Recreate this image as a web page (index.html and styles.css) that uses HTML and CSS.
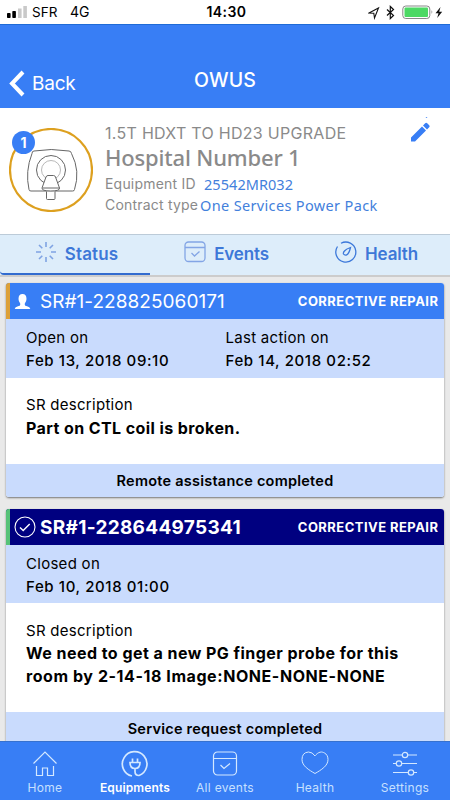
FILE: index.html
```html
<!DOCTYPE html>
<html lang="en">
<head>
<meta charset="utf-8">
<title>OWUS</title>
<link rel="stylesheet" href="styles.css">
</head>
<body>
<div class="app">
  <div class="statusbar">
    <svg class="signal" width="20" height="12" viewBox="0 0 20 12"><rect x="0" y="7" width="3.6" height="5" rx=".8"/><rect x="5.3" y="5" width="3.6" height="7" rx=".8"/><path fill="#c9c9c9" d="M11 2.500h3.600v9.500H11zM16.300 0h3.600v12h-3.600z"/></svg>
    <span class="carrier">SFR</span>
    <span class="network">4G</span>
    <span class="clock">14:30</span>
    <svg class="sysicons" width="76" height="16" viewBox="0 0 76 16"><path d="M1 9 10.500 4 6.500 14 5.800 9.200Z" fill="none" stroke="#111" stroke-width="1.100"/><path d="m19 5.500 6.500 6-3.200 3V2.500l3.200 3-6.500 6" fill="none" stroke="#111" stroke-width="1.200"/><rect x="34.800" y="2" width="27" height="12.500" rx="3" fill="#fff" stroke="#888"/><rect x="36.500" y="3.500" width="23.500" height="9.500" rx="1" fill="#4cd964"/><path d="M63.500 6v4q1.800-2 0-4" fill="#888"/><path d="m72.500 3-5 6.200h3l-1.300 4.800 5-6.200h-3z" fill="#111"/></svg>
  </div>

  <header class="navbar">
    <a class="back"><svg width="17" height="27" viewBox="0 0 17 27"><path d="M14 2 3 13.500 14 25" fill="none" stroke="#fff" stroke-width="4"/></svg><span>Back</span></a>
    <h1>OWUS</h1>
  </header>

  <section class="equipment">
    <div class="avatar">
      <svg width="84" height="84" viewBox="0 0 84 84"><circle cx="42" cy="42" r="41" fill="#fff" stroke="#dda01f" stroke-width="2.200"/><g fill="#fff" stroke="#666" stroke-width="1"><path d="M25 23q17-3 35 0 2 0 2.500 2.500 9 17.500 3 36 0 1.500-2 1.500H22q-2 0-2-1.500-4-18 3-36 0-2.500 2-2.500Z"/><circle cx="42" cy="42" r="14.500"/><circle cx="42" cy="42" r="9.500" stroke="#999" stroke-width=".7"/><path d="M39 47.500h5.500q1.500 0 2 1.500l4 11q.5 3-8.700 3t-8.800-3l4-11q.5-1.500 2-1.500ZM33.500 60h17M37.500 63.500v7q0 1 1 1H45q1 0 1-1v-7"/></g></svg>
      <span class="badge">1</span>
    </div>
    <div class="details">
      <div class="model">1.5T HDXT TO HD23 UPGRADE</div>
      <div class="site">Hospital Number 1</div>
      <div class="field"><span class="key k1">Equipment ID</span><span class="val v1">25542MR032</span></div>
      <div class="field"><span class="key k2">Contract type</span><span class="val v2">One Services Power Pack</span></div>
    </div>
    <svg class="edit" width="22" height="26" viewBox="0 0 22 26"><path d="m1 20.500 11-11 4 4-11 11H1Zm12-12 2.200-2.200q1-1 2 0l2 2q1 1 0 2L17 12.500Z" fill="#387ef5"/><path d="M15.500 1 16.500 0l1 1" fill="#387ef5"/></svg>
  </section>

  <nav class="tabs">
    <a class="tab active"><svg width="22" height="22" viewBox="0 0 22 22" fill="none" stroke="#7fa3e3" stroke-width="1.600"><path d="M11 1v5M11 16v5M1 11h5M16 11h5M4 4l3.300 3.300M14.700 14.700 18 18M18 4l-3.300 3.300M7.300 14.700 4 18"/></svg><span>Status</span></a>
    <a class="tab"><svg width="22" height="22" viewBox="0 0 22 22" fill="none" stroke="#83a5e5" stroke-width="1.300"><rect x="1" y="1" width="20" height="19.500" rx="3.500"/><path d="M1 6.500h20M7.500 12l3 3 5-4.500"/></svg><span>Events</span></a>
    <a class="tab"><svg width="22" height="22" viewBox="0 0 22 22" fill="none" stroke="#3c78da" stroke-width="1.300"><path d="M6 2.300A10 10 0 1 1 2.500 5.500M15.500 6.500q-1.500 6.500-4 7.500-2 .5-3-1-.5-1.500 1-3Q11 8 15.500 6.500Z"/></svg><span>Health</span></a>
  </nav>

  <main class="list">
    <article class="card open">
      <div class="card-head"><svg width="17" height="17" viewBox="0 0 17 17"><path fill="#fff" d="M8.500 1q4 0 4 5 0 2.500-1.700 4.500v1.500q0 1 2.200 1.300 3 .5 3.300 2.700H.7q.3-2.200 3.300-2.700 2.200-.3 2.200-1.300v-1.500Q4.500 8.500 4.500 6q0-5 4-5Z"/></svg><span class="number">SR#1-228825060171</span><span class="kind">CORRECTIVE REPAIR</span></div>
      <div class="dates">
        <div><p>Open on</p><p class="date">Feb 13, 2018 09:10</p></div>
        <div><p>Last action on</p><p class="date">Feb 14, 2018 02:52</p></div>
      </div>
      <div class="desc"><p>SR description</p><p class="text t1">Part on CTL coil is broken.</p></div>
      <div class="card-foot"><span class="f1">Remote assistance completed</span></div>
    </article>
    <article class="card closed">
      <div class="card-head"><svg width="22" height="22" viewBox="0 0 22 22" fill="none" stroke="#fff" stroke-width="1.100"><circle cx="11" cy="11" r="10"/><path d="m6 11.500 3.200 3 6.500-6.500" stroke-width="1.400"/></svg><span class="number">SR#1-228644975341</span><span class="kind">CORRECTIVE REPAIR</span></div>
      <div class="dates">
        <div><p>Closed on</p><p class="date">Feb 10, 2018 01:00</p></div>
      </div>
      <div class="desc"><p>SR description</p><p class="text"><span class="t2">We need to get a new PG finger probe for this</span><br><span class="t3">room by 2-14-18 Image:NONE-NONE-NONE</span></p></div>
      <div class="card-foot"><span class="f2">Service request completed</span></div>
    </article>
  </main>

  <nav class="tabbar">
    <a><svg width="28" height="28" viewBox="0 0 28 28"><path d="M2.500 13.500 14 2l11.500 11.500M5.500 16v9.500h6V18h5v7.500h6V16"/></svg><span>Home</span></a>
    <a class="current"><svg width="28" height="28" viewBox="0 0 28 28"><path stroke-width="1.700" d="M14 18v3.500q0 4 4 4A12.300 12.300 0 1 0 11 26M9 12.500h10q0 6-5 6t-5-6ZM11.500 8.500v4M16.500 8.500v4"/></svg><span>Equipments</span></a>
    <a><svg width="28" height="28" viewBox="0 0 28 28"><rect x="2.500" y="2" width="23" height="23" rx="4"/><path d="M2.500 8.500h23M9.500 15l3.500 3.500 6-5"/></svg><span>All events</span></a>
    <a><svg width="28" height="28" viewBox="0 0 28 28"><path stroke-width="1" d="M14 6q-2.500-4-6.500-4Q1 2.500 1 9.500C1 16 8 20 14 23.500 20 20 27 16 27 9.500 27 2.500 20.500 2 20.500 2 16.500 2 14 6 14 6Z"/></svg><span>Health</span></a>
    <a><svg width="28" height="28" viewBox="0 0 28 28"><path d="M2 5h9M17 5h9M2 13.500h3M11 13.500h15M2 22.500h15M23 22.500h3"/><circle cx="14" cy="5" r="2.700"/><circle cx="8" cy="13.500" r="2.700"/><circle cx="20" cy="22.500" r="2.700"/></svg><span>Settings</span></a>
  </nav>
</div>
</body>
</html>
```
FILE: styles.css
```css
* { box-sizing: border-box; }
body { margin: 0; font-family: Inter, Roboto, sans-serif; color: #000; }
p, h1 { margin: 0; font-weight: 400; }
svg { display: block; flex: none; }
span { white-space: nowrap; }
.app { width: 450px; height: 800px; display: flex; flex-direction: column; overflow: hidden; background: #e9e9e9; }

.statusbar { height: 24px; flex: none; display: grid; grid-template-columns: 25px 38px 118px 1fr 76px; align-items: center; padding: 0 6px 0 7px; background: #fff; font-size: 14px; line-height: 24px; }
.signal { margin-top: -1px; }
.carrier { font-size: 13.5px; }
.clock { font-weight: 600; text-align: left; padding-left: 18.5px; letter-spacing: .4px; }

.navbar { height: 84px; flex: none; display: grid; grid-template-columns: 1fr auto 1fr; align-items: center; padding: 28px 9px 0; background: #387ef5; border-top: 1px solid #1f6bd6; color: #fff; }
.back { display: flex; align-items: center; gap: 6px; font-size: 19px; letter-spacing: -.2px; margin-top: 5px; }
.navbar h1 { font-size: 19.5px; font-weight: 500; line-height: 26px; margin-top: -2px; letter-spacing: .2px; }

.equipment { height: 126px; flex: none; display: flex; background: #fff; padding: 8px 18px 0 9px; }
.avatar { position: relative; width: 96px; padding-top: 12px; }
.badge { position: absolute; left: 3px; top: 15px; width: 23px; height: 23px; border-radius: 50%; background: #387ef5; color: #fff; font: 700 14px/23px Inter, sans-serif; text-align: center; }
.details { flex: 1; color: #8a8a8a; padding-top: 6px; }
.model { font-size: 16px; line-height: 22px; letter-spacing: .29px; }
.site { font: 500 22px/27px "Noto Sans", sans-serif; letter-spacing: -.17px; margin-bottom: 3px; }
.field { display: flex; font-size: 14px; line-height: 20.5px; }
.key { letter-spacing: .2px; }
.val { color: #4380dc; font-family: "Noto Sans", sans-serif; font-size: 14.5px; }
.v1 { letter-spacing: .05px; }
.v2 { letter-spacing: .35px; }
.k1 { width: 99px; }
.k2 { width: 95px; }
.edit { margin-top: 1px; }

.tabs { height: 43px; flex: none; display: flex; background: #ddedfa; border-top: 1px solid #bccbd8; border-bottom: 2px solid #ccc; color: #3d78d8; font-size: 17px; font-weight: 600; }
.tab { flex: 1; display: flex; align-items: center; justify-content: center; gap: 8px; padding: 0 0 1px 3px; border-bottom: 2px solid transparent; letter-spacing: -.15px; }
.tab svg { margin-top: -3px; }
.tab.active { border-color: #326bcf; border-radius: 0 0 0 4px; letter-spacing: .1px; }

.list { flex: 1; min-height: 0; overflow: hidden; padding: 6px 6px 0; display: flex; flex-direction: column; gap: 12px; }
.card { flex: none; border-radius: 3px; background: #fff; box-shadow: 0 1px 2px rgba(0,0,0,.5); overflow: hidden; font-size: 15px; letter-spacing: .28px; }
.card-head { height: 36px; display: flex; align-items: center; padding-right: 6px; color: #fff; background: #387ef5; border-left: 4px solid #dda037; padding-left: 4px; letter-spacing: 0; }
.number { font-size: 19px; margin-left: 9px; letter-spacing: .04px; }
.kind { margin: 0 -.4px 0 auto; font-size: 13px; font-weight: 700; letter-spacing: .45px; }
.closed .card-head { background: #000080; border-color: #57c278; }
.closed .number { font-weight: 700; margin-left: 4px; letter-spacing: .3px; }
.dates { height: 59px; display: grid; grid-template-columns: 199.5px 1fr; padding: 8px 20px 0; background: #c9dbfd; line-height: 22.5px; }
.date { font-weight: 500; letter-spacing: .61px; }
.closed .dates { height: 58px; }
.desc { height: 86px; padding: 15px 20px 0; line-height: 23.5px; }
.closed .desc { height: 109px; padding-top: 16px; line-height: 23px; }
.text { font-size: 16px; font-weight: 700; }
.t1 { letter-spacing: .41px; }
.t2 { letter-spacing: .46px; }
.t3 { letter-spacing: .57px; }
.card-foot { height: 33px; background: #c9dbfd; text-align: center; font-size: 14.5px; font-weight: 600; line-height: 33px; letter-spacing: .24px; }

.tabbar { height: 59px; flex: none; display: flex; background: #387ef5; border-top: 1px solid #3671cf; color: #c7e0ff; }
.tabbar a { flex: 1; display: flex; flex-direction: column; align-items: center; padding-top: 8px; font-size: 12px; line-height: 18px; gap: 1px; letter-spacing: .3px; }
.tabbar svg { fill: none; stroke: #d4e8ff; stroke-width: 1.2px; }
.tabbar .current { color: #fff; font-weight: 600; letter-spacing: .15px; }
```
